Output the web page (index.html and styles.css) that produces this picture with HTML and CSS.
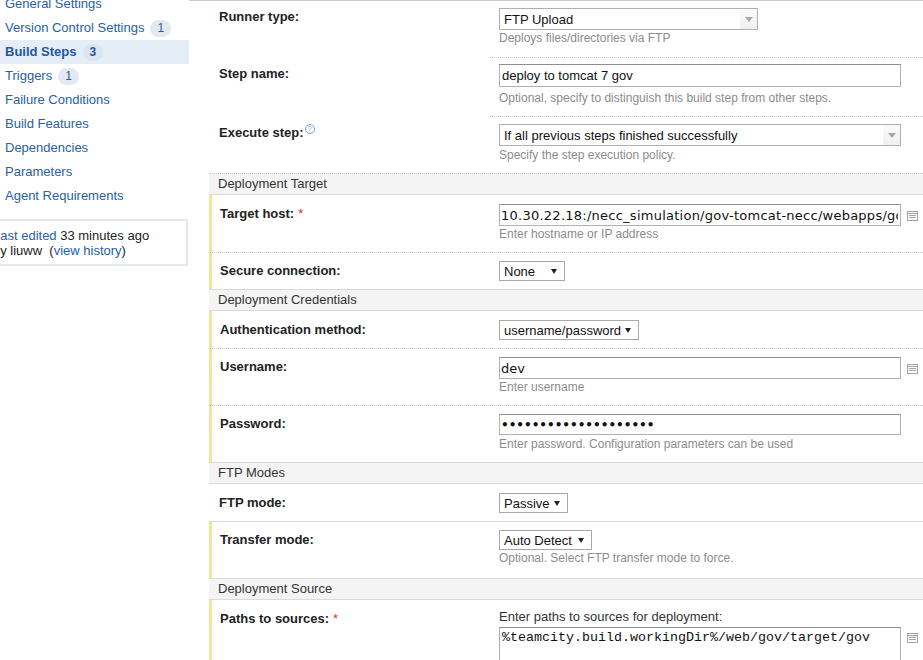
FILE: index.html
```html
<!DOCTYPE html>
<html>
<head>
<meta charset="utf-8">
<link rel="stylesheet" href="styles.css">
</head>
<body>
<div class="page">
  <aside class="side">
    <ul class="nav">
      <li><a href="#">General Settings</a></li>
      <li><a href="#">Version Control Settings</a><span class="badge">1</span></li>
      <li class="active"><a href="#">Build Steps</a><span class="badge">3</span></li>
      <li><a href="#">Triggers</a><span class="badge">1</span></li>
      <li><a href="#">Failure Conditions</a></li>
      <li><a href="#">Build Features</a></li>
      <li><a href="#">Dependencies</a></li>
      <li><a href="#">Parameters</a></li>
      <li><a href="#">Agent Requirements</a></li>
    </ul>
    <div class="edited">
      <div><a href="#">Last edited</a> 33 minutes ago</div>
      <div>by liuww&nbsp; (<a href="#">view history</a>)</div>
    </div>
  </aside>

  <main class="main">
    <div class="row g1 r1">
      <div class="lbl">Runner type:</div>
      <div class="val">
        <div class="combo w258"><span>FTP Upload</span><i class="combo-arrow"></i></div>
        <div class="desc">Deploys files/directories via FTP</div>
      </div>
    </div>
    <div class="row g1 r2">
      <div class="lbl">Step name:</div>
      <div class="val sepv">
        <input class="txt" type="text" value="deploy to tomcat 7 gov">
        <div class="desc">Optional, specify to distinguish this build step from other steps.</div>
      </div>
    </div>
    <div class="row g1 r3">
      <div class="lbl">Execute step:<span class="help">?</span></div>
      <div class="val sepv">
        <div class="combo w402"><span>If all previous steps finished successfully</span><i class="combo-arrow"></i></div>
        <div class="desc">Specify the step execution policy.</div>
      </div>
    </div>

    <div class="sec">Deployment Target</div>
    <div class="row s req first tall">
      <div class="lbl">Target host:<span class="star">*</span></div>
      <div class="val">
        <div class="field">
          <input class="txt vera host" type="text" value="10.30.22.18:/necc_simulation/gov-tomcat-necc/webapps/gov">
          <svg class="list-ico" width="11" height="10" viewBox="0 0 11 10"><rect x="0.5" y="0.5" width="10" height="9" fill="none" stroke="#a3a3a3"/><path d="M0.5 2.5h10M2 4.5h7M2 6.5h7" stroke="#a3a3a3" fill="none"/></svg>
        </div>
        <div class="desc">Enter hostname or IP address</div>
      </div>
    </div>
    <div class="row s req short">
      <div class="lbl">Secure connection:</div>
      <div class="val">
        <div class="sel w65"><span>None</span><i class="caret"></i></div>
      </div>
    </div>

    <div class="sec solid">Deployment Credentials</div>
    <div class="row s req first short">
      <div class="lbl">Authentication method:</div>
      <div class="val">
        <div class="sel w139"><span>username/password</span><i class="caret"></i></div>
      </div>
    </div>
    <div class="row s req tall">
      <div class="lbl">Username:</div>
      <div class="val">
        <div class="field">
          <input class="txt vera" type="text" value="dev">
          <svg class="list-ico" width="11" height="10" viewBox="0 0 11 10"><rect x="0.5" y="0.5" width="10" height="9" fill="none" stroke="#a3a3a3"/><path d="M0.5 2.5h10M2 4.5h7M2 6.5h7" stroke="#a3a3a3" fill="none"/></svg>
        </div>
        <div class="desc">Enter username</div>
      </div>
    </div>
    <div class="row s req tall">
      <div class="lbl">Password:</div>
      <div class="val">
        <input class="txt pwd" type="password" value="xxxxxxxxxxxxxxxxxxxx">
        <div class="desc">Enter password. Configuration parameters can be used</div>
      </div>
    </div>

    <div class="sec solid">FTP Modes</div>
    <div class="row s first short">
      <div class="lbl">FTP mode:</div>
      <div class="val">
        <div class="sel w68"><span>Passive</span><i class="caret"></i></div>
      </div>
    </div>
    <div class="row s req solid-sep tall">
      <div class="lbl">Transfer mode:</div>
      <div class="val">
        <div class="sel w92"><span>Auto Detect</span><i class="caret"></i></div>
        <div class="desc">Optional. Select FTP transfer mode to force.</div>
      </div>
    </div>

    <div class="sec solid">Deployment Source</div>
    <div class="row s req first">
      <div class="lbl">Paths to sources:<span class="star">*</span></div>
      <div class="val">
        <div class="note">Enter paths to sources for deployment:</div>
        <div class="field top">
          <textarea class="area">%teamcity.build.workingDir%/web/gov/target/gov</textarea>
          <svg class="list-ico" width="11" height="10" viewBox="0 0 11 10"><rect x="0.5" y="0.5" width="10" height="9" fill="none" stroke="#a3a3a3"/><path d="M0.5 2.5h10M2 4.5h7M2 6.5h7" stroke="#a3a3a3" fill="none"/></svg>
        </div>
      </div>
    </div>
  </main>
</div>
</body>
</html>
```

FILE: styles.css
```css
html, body {
  margin: 0;
  padding: 0;
}
body {
  width: 923px;
  height: 660px;
  overflow: hidden;
  background: #fff;
  font-family: "Liberation Sans", Arial, sans-serif;
  font-size: 13px;
  color: #222;
}
a {
  color: #2561ac;
  text-decoration: none;
}

.page {
  display: flex;
  align-items: flex-start;
}

/* sidebar */
.side {
  width: 189px;
  flex: none;
  margin-top: -8px;
}
.nav {
  list-style: none;
  margin: 0;
  padding: 0;
}
.nav li {
  height: 24px;
  line-height: 24px;
  padding-left: 5px;
  display: flex;
  align-items: center;
}
.nav li.active {
  background: #e5edf7;
}
.nav li.active a {
  font-weight: bold;
  color: #1f57a3;
}
.badge {
  display: inline-block;
  margin-left: 6px;
  height: 17px;
  line-height: 17px;
  padding: 0 7px;
  border-radius: 9px;
  background: #e2e9f2;
  color: #2e5c99;
  font-size: 12px;
}
.nav li.active .badge {
  background: #dae4f2;
  font-weight: bold;
  color: #2a5595;
}
.edited {
  margin: 11px 0 0 -14px;
  width: 193px;
  border: 2px solid #e6e9ec;
  padding: 7px 0 6px 5px;
  line-height: 15px;
  color: #222;
}

/* main form */
.main {
  flex: 1;
  min-width: 0;
  border-top: 1px solid #cbcbcb;
  padding-left: 20px;
}
.row {
  display: grid;
  grid-template-columns: 281px 1fr;
}
.row.req {
  box-shadow: inset 3px 0 #f6e39c;
}
.lbl {
  line-height: 16px;
  font-weight: bold;
  color: #222;
  padding-left: 10px;
}
.row.req .lbl {
  padding-left: 11px;
}
.val {
  padding-left: 9px;
}

/* first group (no section header) */
.row.g1 .lbl {
  padding-top: 9px;
}
.row.r1 .lbl {
  padding-top: 8px;
}
.row.r1 {
  height: 56px;
}
.row.r1 .val {
  padding-top: 7px;
}
.row.r2 {
  height: 59px;
}
.row.r2 .val {
  padding-top: 6px;
}
.row.r2 .desc {
  margin-top: 3px;
}
.row.r3 {
  height: 57px;
}
.row.r3 .val {
  padding-top: 7px;
}
.row.r3 .desc {
  margin-top: 1px;
}
.val.sepv {
  border-top: 1px dotted #c4c4c4;
}

/* section rows */
.row.s {
  border-top: 1px dotted #c4c4c4;
}
.row.s.solid-sep {
  border-top: 1px solid #dcdcdc;
}
.row.s.first {
  border-top: 0;
  padding-top: 1px;
}
.row.s .lbl {
  padding-top: 10px;
}
.row.s .val {
  padding-top: 8px;
}
.row.tall {
  height: 56px;
}
.row.short {
  height: 36px;
}

.desc {
  line-height: 16px;
  font-size: 12px;
  color: #8c8c8c;
}
.note {
  line-height: 16px;
  color: #333;
  margin-bottom: 2px;
}

.sec {
  height: 20px;
  line-height: 20px;
  padding-left: 9px;
  background: #f4f4f4;
  border-top: 1px dotted #c4c4c4;
  border-bottom: 1px solid #dadada;
  color: #333;
}
.sec.solid {
  border-top: 1px solid #dadada;
}

.help {
  display: inline-block;
  vertical-align: top;
  margin: -1px 0 0 1px;
  width: 8px;
  height: 8px;
  border: 1px solid #79a3d6;
  border-radius: 50%;
  color: #79a3d6;
  font-size: 7px;
  line-height: 8px;
  text-align: center;
  font-weight: normal;
}
.star {
  color: #d9342b;
  font-weight: normal;
  margin-left: 4px;
}

/* controls */
.txt {
  display: block;
  box-sizing: border-box;
  width: 402px;
  height: 23px;
  margin: 0;
  padding: 0 2px;
  border: 1px solid #b0b0b0;
  border-top-color: #8f8f8f;
  font-family: "Liberation Sans", Arial, sans-serif;
  font-size: 13px;
  color: #111;
  background: #fff;
}
.txt.vera {
  font-family: "DejaVu Sans", Verdana, sans-serif;
  font-size: 13px;
  height: 22px;
  padding-left: 1px;
}
.txt.host {
  letter-spacing: 0.25px;
}
.row.tall .txt.vera + .list-ico {
  margin-top: 1px;
}
.txt.pwd {
  font-family: "DejaVu Sans", Verdana, sans-serif;
  font-size: 12px;
  font-weight: bold;
  height: 21px;
  padding-left: 1px;
  margin-bottom: 1px;
}
.field {
  display: flex;
  align-items: center;
  gap: 6px;
}
.field.top {
  align-items: flex-start;
}
.field.top .list-ico {
  margin-top: 6px;
}
.list-ico {
  flex: none;
}
.area {
  display: block;
  box-sizing: border-box;
  width: 402px;
  height: 60px;
  margin: 0;
  padding: 2px 2px;
  border: 1px solid #b0b0b0;
  border-top-color: #8f8f8f;
  font-family: "Liberation Mono", "Courier New", monospace;
  font-size: 13.33px;
  line-height: 16px;
  color: #111;
  resize: none;
}

.combo {
  box-sizing: border-box;
  height: 22px;
  border: 1px solid #b0b0b0;
  display: flex;
  align-items: center;
  justify-content: space-between;
  padding-left: 4px;
  background: #fff;
  color: #111;
}
.combo-arrow {
  width: 17px;
  height: 20px;
  display: flex;
  align-items: center;
  justify-content: center;
  background: linear-gradient(#fafafa, #f0f0f0);
}
.combo-arrow::before {
  content: "";
  border-left: 4px solid transparent;
  border-right: 4px solid transparent;
  border-top: 5px solid #a8a8a8;
}
.w258 { width: 259px; }
.w402 { width: 402px; }

.sel {
  box-sizing: border-box;
  height: 20px;
  border: 1px solid #a8a8a8;
  display: flex;
  align-items: center;
  justify-content: space-between;
  padding: 0 7px 0 4px;
  background: #fff;
  color: #111;
}
.caret {
  width: 0;
  height: 0;
  border-left: 3px solid transparent;
  border-right: 3px solid transparent;
  border-top: 5px solid #222;
}
.w65 { width: 66px; }
.w139 { width: 140px; }
.w68 { width: 69px; }
.w92 { width: 93px; }
```
